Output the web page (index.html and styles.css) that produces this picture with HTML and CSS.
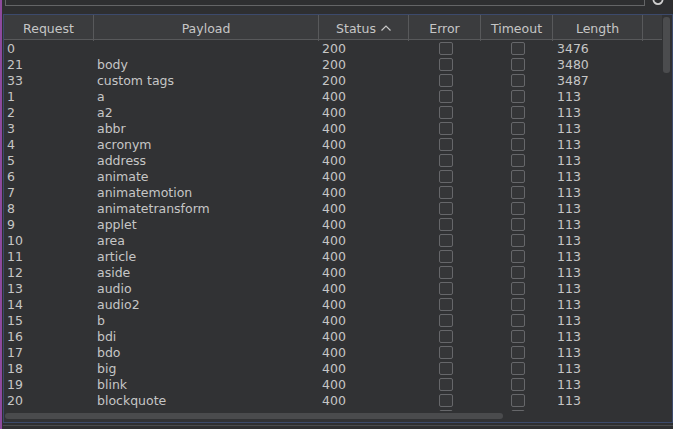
FILE: index.html
```html
<!DOCTYPE html>
<html>
<head>
<meta charset="utf-8">
<link rel="stylesheet" href="styles.css">
</head>
<body>
<div class="app">
  <div class="stripe"></div>
  <div class="main">
    <div class="topbar">
      <div class="field"></div>
      <svg class="help" width="14" height="14" viewBox="0 0 14 14"><circle cx="7" cy="-0.5" r="4.6" fill="none" stroke="#cfcfcf" stroke-width="1.8"/></svg>
    </div>
    <div class="table">
      <div class="upper">
        <div class="gridarea">
          <div class="head">
            <div class="hc">Request</div>
            <div class="hc">Payload</div>
            <div class="hc">Status <svg class="chev" width="10" height="6" viewBox="0 0 10 6"><polyline points="0.5,5.5 5,1 9.5,5.5" fill="none" stroke="#c8c8c8" stroke-width="1.2"/></svg></div>
            <div class="hc">Error</div>
            <div class="hc">Timeout</div>
            <div class="hc">Length</div>
            <div class="hc last"></div>
          </div>
          <div class="rows">
            <div class="row"><span>0</span><span></span><span>200</span><span class="cb"><i></i></span><span class="cb"><i></i></span><span class="len">3476</span><span></span></div>
            <div class="row"><span>21</span><span>body</span><span>200</span><span class="cb"><i></i></span><span class="cb"><i></i></span><span class="len">3480</span><span></span></div>
            <div class="row"><span>33</span><span>custom tags</span><span>200</span><span class="cb"><i></i></span><span class="cb"><i></i></span><span class="len">3487</span><span></span></div>
            <div class="row"><span>1</span><span>a</span><span>400</span><span class="cb"><i></i></span><span class="cb"><i></i></span><span class="len">113</span><span></span></div>
            <div class="row"><span>2</span><span>a2</span><span>400</span><span class="cb"><i></i></span><span class="cb"><i></i></span><span class="len">113</span><span></span></div>
            <div class="row"><span>3</span><span>abbr</span><span>400</span><span class="cb"><i></i></span><span class="cb"><i></i></span><span class="len">113</span><span></span></div>
            <div class="row"><span>4</span><span>acronym</span><span>400</span><span class="cb"><i></i></span><span class="cb"><i></i></span><span class="len">113</span><span></span></div>
            <div class="row"><span>5</span><span>address</span><span>400</span><span class="cb"><i></i></span><span class="cb"><i></i></span><span class="len">113</span><span></span></div>
            <div class="row"><span>6</span><span>animate</span><span>400</span><span class="cb"><i></i></span><span class="cb"><i></i></span><span class="len">113</span><span></span></div>
            <div class="row"><span>7</span><span>animatemotion</span><span>400</span><span class="cb"><i></i></span><span class="cb"><i></i></span><span class="len">113</span><span></span></div>
            <div class="row"><span>8</span><span>animatetransform</span><span>400</span><span class="cb"><i></i></span><span class="cb"><i></i></span><span class="len">113</span><span></span></div>
            <div class="row"><span>9</span><span>applet</span><span>400</span><span class="cb"><i></i></span><span class="cb"><i></i></span><span class="len">113</span><span></span></div>
            <div class="row"><span>10</span><span>area</span><span>400</span><span class="cb"><i></i></span><span class="cb"><i></i></span><span class="len">113</span><span></span></div>
            <div class="row"><span>11</span><span>article</span><span>400</span><span class="cb"><i></i></span><span class="cb"><i></i></span><span class="len">113</span><span></span></div>
            <div class="row"><span>12</span><span>aside</span><span>400</span><span class="cb"><i></i></span><span class="cb"><i></i></span><span class="len">113</span><span></span></div>
            <div class="row"><span>13</span><span>audio</span><span>400</span><span class="cb"><i></i></span><span class="cb"><i></i></span><span class="len">113</span><span></span></div>
            <div class="row"><span>14</span><span>audio2</span><span>400</span><span class="cb"><i></i></span><span class="cb"><i></i></span><span class="len">113</span><span></span></div>
            <div class="row"><span>15</span><span>b</span><span>400</span><span class="cb"><i></i></span><span class="cb"><i></i></span><span class="len">113</span><span></span></div>
            <div class="row"><span>16</span><span>bdi</span><span>400</span><span class="cb"><i></i></span><span class="cb"><i></i></span><span class="len">113</span><span></span></div>
            <div class="row"><span>17</span><span>bdo</span><span>400</span><span class="cb"><i></i></span><span class="cb"><i></i></span><span class="len">113</span><span></span></div>
            <div class="row"><span>18</span><span>big</span><span>400</span><span class="cb"><i></i></span><span class="cb"><i></i></span><span class="len">113</span><span></span></div>
            <div class="row"><span>19</span><span>blink</span><span>400</span><span class="cb"><i></i></span><span class="cb"><i></i></span><span class="len">113</span><span></span></div>
            <div class="row"><span>20</span><span>blockquote</span><span>400</span><span class="cb"><i></i></span><span class="cb"><i></i></span><span class="len">113</span><span></span></div>
            <div class="row"><span>22</span><span>body</span><span>400</span><span class="cb"><i></i></span><span class="cb"><i></i></span><span class="len">113</span><span></span></div>
          </div>
        </div>
        <div class="vscroll"><div class="vthumb"></div></div>
      </div>
      <div class="hscroll"><div class="hthumb"></div></div>
    </div>
    <div class="footer"><div class="fline"></div></div>
  </div>
</div>
</body>
</html>
```

FILE: styles.css
```css
* { box-sizing: border-box; }
html, body {
  margin: 0;
  padding: 0;
  width: 673px;
  height: 429px;
  overflow: hidden;
  background: #2e2f31;
  font-family: "DejaVu Sans", sans-serif;
  font-size: 12.5px;
  color: #c6c6c6;
}
.app {
  display: flex;
  width: 673px;
  height: 429px;
}
.stripe {
  width: 2px;
  flex: none;
  background: #8e4a9e;
}
.main {
  margin-left: 1px;
  width: 670px;
  display: flex;
  flex-direction: column;
}
.topbar {
  height: 14px;
  flex: none;
  display: flex;
  align-items: flex-start;
}
.field {
  margin-left: 2px;
  width: 640px;
  height: 6px;
  border: 1px solid #646567;
  border-top: none;
}
.help {
  margin-left: 6px;
  display: block;
}
.table {
  width: 670px;
  height: 409px;
  flex: none;
  border: 1px solid #3c4a6c;
  background: #313234;
  display: flex;
  flex-direction: column;
}
.upper {
  display: flex;
  height: 396px;
}
.gridarea {
  width: 658px;
  display: flex;
  flex-direction: column;
}
.head, .row {
  display: grid;
  grid-template-columns: 90px 225px 90px 72px 72px 90px 19px;
}
.head {
  height: 25px;
  background: #3b3c3e;
  border-bottom: 1px solid #58595b;
}
.hc {
  border-right: 1px solid #58595b;
  display: flex;
  align-items: center;
  justify-content: center;
  line-height: 24px;
  padding-top: 2px;
  white-space: nowrap;
}
.hc.last { border-right: none; }
.chev { margin-left: 5px; margin-top: -2px; }
.rows {
  height: 371px;
  overflow: hidden;
}
.row {
  height: 16px;
  line-height: 16px;
}
.row span {
  padding-left: 3px;
  padding-top: 1px;
  white-space: nowrap;
}
.row span.len { padding-left: 4px; }
.row span.cb {
  padding-left: 0;
  display: flex;
  justify-content: center;
  align-items: flex-start;
  padding-top: 2px;
}
.cb i {
  display: block;
  width: 14px;
  height: 13px;
  margin-left: 2px;
  border: 1px solid #66676a;
  border-radius: 2px;
  background: #353638;
}
.vscroll {
  width: 10px;
  padding-top: 2px;
  padding-left: 1px;
}
.vthumb {
  width: 7px;
  height: 56px;
  border-radius: 3px;
  background: #4b4c4e;
}
.hscroll {
  height: 11px;
  padding-top: 2px;
  padding-left: 1px;
}
.hthumb {
  width: 498px;
  height: 6px;
  border-radius: 3px;
  background: #4a4b4d;
}
.footer {
  height: 6px;
  padding-top: 2px;
}
.fline {
  height: 1px;
  background: #4a4b4d;
}
```
